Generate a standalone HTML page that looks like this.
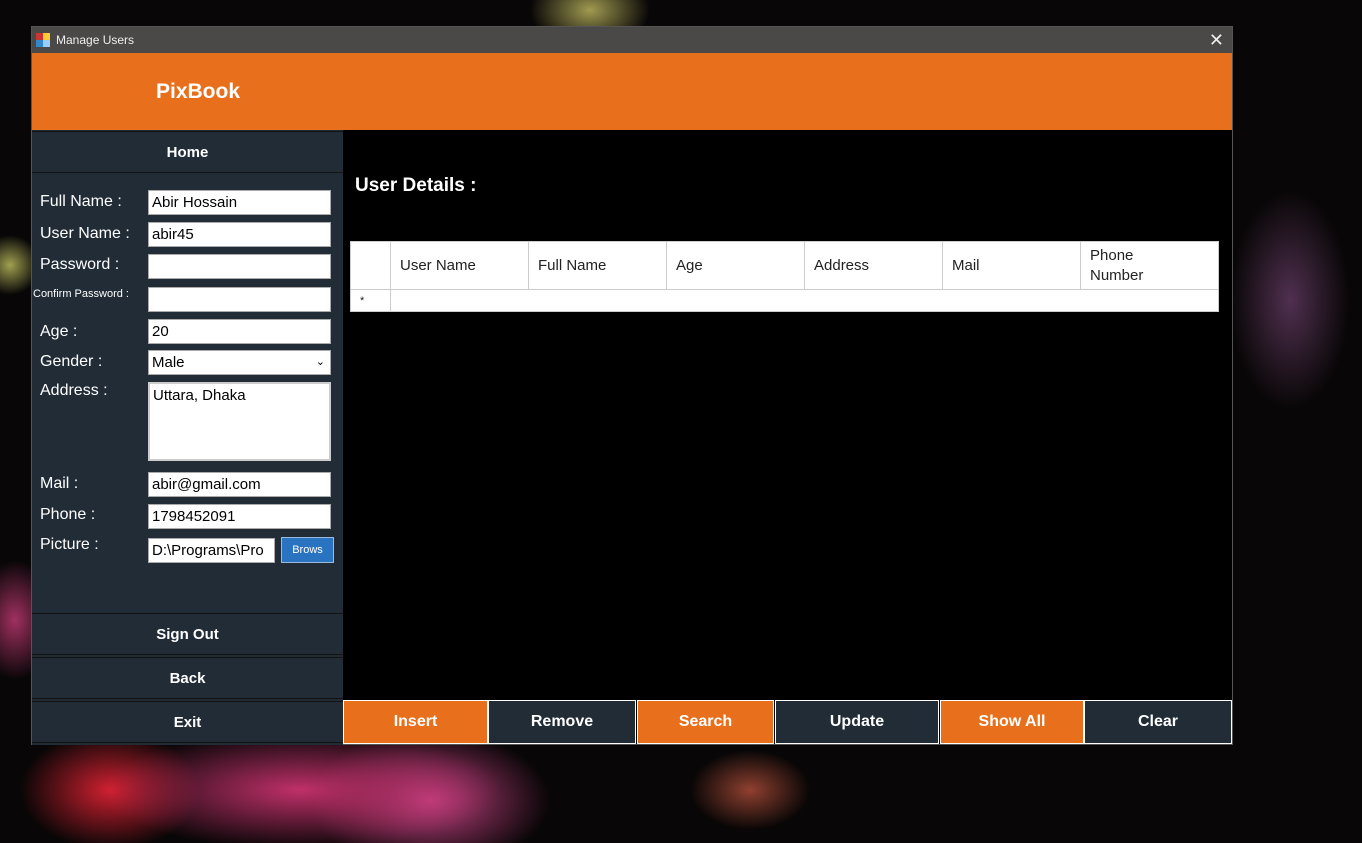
<!DOCTYPE html><html><head><style>
*{box-sizing:border-box;margin:0;padding:0}
body{width:1362px;height:843px;overflow:hidden;position:relative;font-family:"Liberation Sans",sans-serif;
background:radial-gradient(ellipse 60px 40px at 590px 10px,#a09a50,transparent),radial-gradient(ellipse 200px 60px at 300px 790px,#c0306a,transparent),radial-gradient(ellipse 120px 70px at 430px 800px,#c04080,transparent),radial-gradient(ellipse 90px 60px at 110px 790px,#d02030,transparent),radial-gradient(ellipse 60px 40px at 750px 790px,#904030,transparent),radial-gradient(ellipse 60px 110px at 1290px 300px,#503050,transparent),radial-gradient(ellipse 40px 60px at 15px 620px,#a03060,transparent),radial-gradient(ellipse 30px 30px at 10px 265px,#a0a050,transparent),#080606}
.win{position:absolute;left:31px;top:26px;width:1202px;height:719px;background:#000;border:1px solid #555}
.tb{position:absolute;left:0;top:0;width:1200px;height:26px;background:#4b4948;color:#eee;font-size:12px;line-height:26px;padding-left:24px}
.hd{position:absolute;left:0;top:26px;width:1200px;height:77px;background:#e8701c;color:#fff;font-weight:bold;font-size:21px;line-height:77px;padding-left:124px}
.lp{position:absolute;left:0;top:103px;width:311px;height:615px;background:#212c37}
.nb{position:absolute;left:0;width:311px;height:42px;background:#212c37;border-top:1px solid #111;border-bottom:1px solid #111;color:#fff;font-weight:bold;font-size:15px;text-align:center;line-height:42px}
.lb{position:absolute;left:8px;color:#fff;font-size:16px}
.in{position:absolute;left:116px;width:183px;height:25px;background:#fff;border:1px solid #aaa;font-size:15px;line-height:23px;padding-left:3px;color:#000;white-space:nowrap;overflow:hidden}
.bb{position:absolute;top:673px;height:44px;color:#fff;font-weight:bold;font-size:16px;text-align:center;line-height:42px;border:1px solid #fff}
.o{background:#e8701c}.d{background:#212c37}
table{position:absolute;left:318px;top:214px;border-collapse:collapse;background:#fff;font-size:15px;color:#222}
td{border:1px solid #ccc;padding-left:9px}
</style></head><body>
<div class="win">
<div class="tb"><svg style="position:absolute;left:4px;top:6px" width="14" height="14"><rect x="0" y="0" width="7" height="7" fill="#c33"/><rect x="7" y="0" width="7" height="7" fill="#fc3"/><rect x="0" y="7" width="7" height="7" fill="#38c"/><rect x="7" y="7" width="7" height="7" fill="#9cf"/></svg>Manage Users<span style="position:absolute;right:8px;top:0;font-size:18px">✕</span></div>
<div class="hd">PixBook</div>
<div class="lp">
<div class="nb" style="top:1px">Home</div>
<div class="lb" style="top:63px">Full Name :</div><div class="in" style="top:60px">Abir Hossain</div>
<div class="lb" style="top:95px">User Name :</div><div class="in" style="top:92px">abir45</div>
<div class="lb" style="top:126px">Password :</div><div class="in" style="top:124px"></div>
<div class="lb" style="top:158px;left:1px;font-size:11px">Confirm Password :</div><div class="in" style="top:157px"></div>
<div class="lb" style="top:193px">Age :</div><div class="in" style="top:189px">20</div>
<div class="lb" style="top:223px">Gender :</div><div class="in" style="top:220px">Male<span style="position:absolute;right:5px;font-size:11px">⌄</span></div>
<div class="lb" style="top:252px">Address :</div><div class="in" style="top:252px;height:79px;line-height:24px;border:2px solid #ccc">Uttara, Dhaka</div>
<div class="lb" style="top:345px">Mail :</div><div class="in" style="top:342px">abir@gmail.com</div>
<div class="lb" style="top:376px">Phone :</div><div class="in" style="top:374px">1798452091</div>
<div class="lb" style="top:406px">Picture :</div><div class="in" style="top:408px;width:127px">D:\Programs\Pro</div>
<div style="position:absolute;left:249px;top:407px;width:53px;height:26px;background:#2a73c0;border:1px solid #9bd;color:#fff;font-size:11px;text-align:center;line-height:24px">Brows</div>
<div class="nb" style="top:483px">Sign Out</div>
<div class="nb" style="top:527px">Back</div>
<div class="nb" style="top:571px">Exit</div>
</div>
<div style="position:absolute;left:323px;top:148px;color:#fff;font-weight:bold;font-size:19px">User Details :</div>
<table><tr style="height:48px"><td style="width:40px"></td><td style="width:138px">User Name</td><td style="width:138px">Full Name</td><td style="width:138px">Age</td><td style="width:138px">Address</td><td style="width:138px">Mail</td><td style="width:138px;line-height:20px">Phone<br>Number</td></tr>
<tr style="height:22px"><td style="font-size:11px">*</td><td colspan="6"></td></tr></table>
<div class="bb o" style="left:311px;width:145px">Insert</div>
<div class="bb d" style="left:456px;width:148px">Remove</div>
<div class="bb o" style="left:605px;width:137px">Search</div>
<div class="bb d" style="left:743px;width:164px">Update</div>
<div class="bb o" style="left:908px;width:144px">Show All</div>
<div class="bb d" style="left:1052px;width:148px">Clear</div>
</div>
</body></html>
